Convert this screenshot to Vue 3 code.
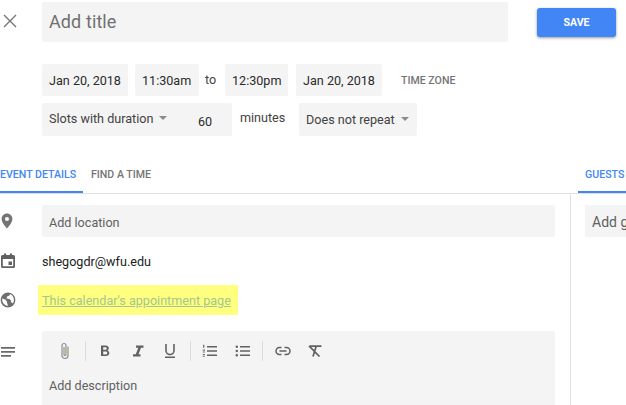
<script setup>
</script>

<template>
  <div class="page">
    <header class="title-row">
      <div class="gutter close">
        <svg width="18" height="18" viewBox="0 0 18 18"><path d="M3 3l12 12M15 3L3 15" stroke="#757575" stroke-width="1.400" fill="none"/></svg>
      </div>
      <div class="title-box">Add title</div>
      <button class="save">SAVE</button>
    </header>

    <div class="row row-one">
      <div class="chip date1">Jan 20, 2018</div>
      <div class="chip time1">11:30am</div>
      <span class="to">to</span>
      <div class="chip time2">12:30pm</div>
      <div class="chip date2">Jan 20, 2018</div>
      <span class="tz">TIME ZONE</span>
    </div>

    <div class="row row-two">
      <div class="chip slots">Slots with duration<i class="caret"></i></div>
      <div class="chip sixty">60</div>
      <span class="minutes">minutes</span>
      <div class="chip repeat">Does not repeat<i class="caret"></i></div>
    </div>

    <nav class="tabs">
      <div class="left-tabs">
        <div class="tab active first">EVENT DETAILS</div>
        <div class="tab second">FIND A TIME</div>
      </div>
      <div class="tab active guests">GUESTS</div>
    </nav>

    <div class="columns">
      <section class="main">
        <div class="item loc">
          <div class="gutter">
            <svg width="14" height="16" viewBox="0 0 14 16"><path fill-rule="evenodd" d="M7 0.500C3.900 0.500 1.600 2.900 1.600 6c0 3.900 5.400 9.500 5.400 9.500s5.400-5.600 5.400-9.500C12.400 2.900 10.100 0.500 7 0.500zM7 8a2 2 0 1 1 0-4 2 2 0 0 1 0 4z" fill="#757575"/></svg>
          </div>
          <div class="field">Add location</div>
        </div>
        <div class="item cal">
          <div class="gutter">
            <svg width="16" height="16" viewBox="0 0 16 16"><path fill-rule="evenodd" d="M4 0.500h2V2h4V0.500h2V2h1.500A1.500 1.500 0 0 1 15 3.500V13.500A1.500 1.500 0 0 1 13.500 15H2.500A1.500 1.500 0 0 1 1 13.500V3.500A1.500 1.500 0 0 1 2.500 2H4zM2.800 6v7.200h10.400V6zM8.500 8.500h3.500v3.500H8.500z" fill="#616161"/></svg>
          </div>
          <div class="email">shegogdr@wfu.edu</div>
        </div>
        <div class="item globe">
          <div class="gutter">
            <svg width="16" height="16" viewBox="0 0 16 16"><circle cx="8" cy="8" r="7.400" fill="#6e6e6e"/><path d="M2.200 6.500l3 1 1.800 2v1.300l1 3C5 13.700 2.400 11.300 2.200 8zM10 2l-.5 1.500-2.500 1-.5 2 3 .5 1.500 1.500v2h1l1 1C13.800 10 14.200 8 13.600 6 13 4.200 11.800 2.800 10 2z" fill="#fff"/></svg>
          </div>
          <div class="highlight"><a class="link">This calendar's appointment page</a></div>
        </div>
        <div class="item notes">
          <div class="gutter">
            <svg width="15" height="12" viewBox="0 0 15 12"><path d="M1 1h14v1.700H1zM1 5h14v1.700H1zM1 9h10v1.700H1z" fill="#6a6a6a"/></svg>
          </div>
          <div class="editor">
            <div class="toolbar">
              <svg class="clip" width="16" height="18" viewBox="0 0 16 18"><path d="M11 4.500v9a3 3 0 0 1-6 0V3.500a2 2 0 0 1 4 0v9a1 1 0 0 1-2 0V5" fill="none" stroke="#8a8f96" stroke-width="1.200"/><path d="M11 6v7.500" stroke="#d9b96a" stroke-width="1.200"/></svg>
              <i class="sep s1"></i>
              <svg class="tool t-b" width="14" height="14" viewBox="0 0 14 14"><path fill-rule="evenodd" d="M3 1.500h4.600c2 0 3.200 1.100 3.200 2.800 0 1-.5 1.800-1.300 2.200 1.100.4 1.800 1.300 1.800 2.500 0 2-1.400 3-3.500 3H3zM5.200 3.300v2.500h2.200c.8 0 1.300-.5 1.300-1.250S8.200 3.300 7.400 3.300zM5.200 7.600v2.900h2.500c1 0 1.600-.6 1.600-1.450S8.700 7.600 7.700 7.600z" fill="#616161"/></svg>
              <svg class="tool t-i" width="14" height="14" viewBox="0 0 14 14"><path d="M5 1.500h7.500v2.200H10L7.500 10.300h2v2.200H2V10.300h2.800l2.500-6.600H5z" fill="#616161"/></svg>
              <svg class="tool t-u" width="14" height="16" viewBox="0 0 14 16"><path d="M3 1v6.500a4 4 0 0 0 8 0V1" fill="none" stroke="#616161" stroke-width="1.600"/><path d="M2 13.500h10V15H2z" fill="#616161"/></svg>
              <i class="sep s2"></i>
              <svg class="tool t-ol" width="16" height="14" viewBox="0 0 16 14"><path d="M5 2h10v1.500H5zM5 6.300h10v1.500H5zM5 10.500h10V12H5z" fill="#616161"/><path d="M1 .8h1.400v3H1zM.7 5.500h2.300v1.300H.7zM.7 7.500h2.300v1H.7zM.7 10h2.300v1H.7zM.7 11.800h2.300v1H.7z" fill="#757575"/></svg>
              <svg class="tool t-ul" width="16" height="14" viewBox="0 0 16 14"><path d="M5 2h10v1.500H5zM5 6.300h10v1.500H5zM5 10.500h10V12H5z" fill="#616161"/><circle cx="1.800" cy="2.700" r="1.200" fill="#616161"/><circle cx="1.800" cy="7" r="1.200" fill="#616161"/><circle cx="1.800" cy="11.300" r="1.200" fill="#616161"/></svg>
              <i class="sep s3"></i>
              <svg class="tool t-link" width="16" height="10" viewBox="0 0 16 10"><path d="M6.500 1.500H4.500a3.500 3.500 0 0 0 0 7h2M9.500 1.500h2a3.500 3.500 0 0 1 0 7h-2M4.500 5h7" fill="none" stroke="#616161" stroke-width="1.500"/></svg>
              <svg class="tool t-x" width="14" height="12" viewBox="0 0 14 12"><path d="M2 1.200h11.500M8.200 1.200L5 11.500M1 .8l10.500 10.700" fill="none" stroke="#616161" stroke-width="1.700"/></svg>
            </div>
            <div class="desc">Add description</div>
          </div>
        </div>
      </section>
      <aside class="side">
        <div class="guest-field">Add guests</div>
      </aside>
    </div>
  </div>
</template>

<style>
html, body { margin: 0; background: #fff; overflow: hidden; }
</style>

<style scoped>
.page {
  width: 626px; height: 405px; overflow: hidden; background: #fff;
  font-family: Roboto, "Liberation Sans", sans-serif; font-size: 12.6px; color: #212121;
  display: flex; flex-direction: column;
}
.gutter { width: 42px; flex: none; display: flex; }
.title-row { display: flex; align-items: flex-start; padding-top: 2px; height: 40px; }
.close { height: 38px; align-items: center; padding-left: 1px; width: 41px; }
.title-box {
  width: 459px; height: 40px; padding-left: 7px; line-height: 39px; background: #f4f4f4;
  border-radius: 2px; font-size: 18px; color: #707070; letter-spacing: .1px;
}
.save {
  margin: 6px 0 0 29px; width: 79px; height: 29px; border: 0; border-radius: 3px; padding: 0;
  background: #4285f4; color: #fff; font: 700 10.6px Roboto, sans-serif;
  box-shadow: 0 1px 3px rgba(0,0,0,.4);
}
.row { display: flex; padding-left: 42px; }
.row-one { margin-top: 22px; height: 32px; }
.row-two { margin-top: 7px; height: 33px; }
.chip { background: #f4f4f4; border-radius: 2px; display: flex; align-items: center; padding-left: 7px; box-sizing: border-box; color: #2b2b2b; }
.date1 { width: 86px; }
.time1 { width: 64px; margin-left: 7px; }
.to { margin-left: 6px; width: 20px; line-height: 31px; color: #424242; }
.time2 { width: 63px; }
.date2 { width: 86px; margin-left: 8px; }
.tz { margin-left: 19px; font-size: 10.6px; font-weight: 500; color: #757575; line-height: 33px; }
.slots { width: 133px; color: #424242; padding-bottom: 3px; border-radius: 2px 0 0 2px; }
.sixty { width: 57px; padding: 3px 0 0 23px; border-radius: 0 2px 2px 0; }
.minutes { margin-left: 8px; width: 59px; line-height: 30px; color: #424242; }
.repeat { width: 118px; color: #424242; padding-bottom: 1px; }
.caret { display: inline-block; margin-left: 6px; border: 4px solid transparent; border-top-color: #8a8a8a; border-bottom: 0; }
.tabs { display: flex; justify-content: space-between; height: 58px; border-bottom: 1px solid #e0e0e0; box-sizing: border-box; align-items: flex-end; }
.left-tabs { display: flex; }
.tab { height: 29px; line-height: 22px; font-size: 10.6px; font-weight: 500; box-sizing: border-box; color: #757575; }
.tab.active { color: #4285f4; border-bottom: 2px solid #4285f4; }
.first { width: 83px; }
.second { margin-left: 8px; }
.guests { width: 48px; padding-left: 7px; white-space: nowrap; overflow: hidden; }
.columns { display: flex; flex: 1; min-height: 0; }
.main { width: 570px; border-right: 1px solid #e0e0e0; flex: none; padding-top: 11px; }
.item { display: flex; }
.item .gutter { align-items: center; }
.loc { height: 32px; }
.field { width: 506px; padding-left: 7px; background: #f4f4f4; border-radius: 2px; line-height: 35px; color: #616161; }
.cal { margin-top: 8px; height: 32px; }
.email { line-height: 33px; color: #212121; }
.globe { margin-top: 8px; height: 30px; }
.highlight { margin-left: -4px; width: 200px; height: 30px; background: #ffff80; padding-left: 4px; box-sizing: border-box; line-height: 32px; }
.link { color: #a3c78f; text-decoration: underline; white-space: nowrap; }
.notes { margin-top: 16px; height: 74px; }
.notes .gutter { align-items: flex-start; padding-top: 15px; height: 20px; }
.editor { width: 513px; background: #f4f4f4; border-radius: 2px 2px 0 0; }
.toolbar { display: flex; align-items: center; height: 40px; padding-left: 15px; }
.sep { width: 1px; height: 20px; background: #dcdcdc; flex: none; }
.s1 { margin-left: 12px; }
.tool { flex: none; }
.t-b { margin-left: 12px; }
.t-i { margin-left: 19px; }
.t-u { margin-left: 18px; }
.s2 { margin-left: 13px; }
.t-ol { margin-left: 11px; }
.t-ul { margin-left: 17px; }
.s3 { margin-left: 11px; }
.t-link { margin-left: 12px; }
.t-x { margin-left: 17px; }
.desc { padding: 5px 0 0 7px; line-height: 20px; color: #616161; }
.side { flex: 1; padding: 11px 0 0 14px; }
.guest-field { height: 32px; line-height: 35px; padding-left: 7px; background: #f4f4f4; white-space: nowrap; overflow: hidden; color: #616161; font-size: 14px; width: 60px; }
</style>
